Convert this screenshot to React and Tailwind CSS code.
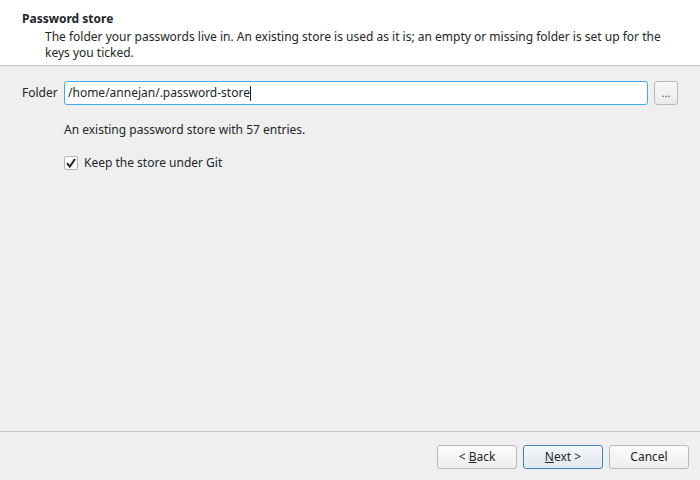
export default function App() {
  return (
    <div
      className="w-[700px] h-[480px] flex flex-col bg-[#efefef] text-[#232629] text-[12px] leading-[16px]"
      style={{ fontFamily: '"Noto Sans", sans-serif' }}
    >
      {/* Header */}
      <div className="bg-white border-b border-[#c4c5c6] h-[66px] pt-[11px] pl-[22px] pr-[22px]">
        <div className="font-bold mb-[2px]">Password store</div>
        <div className="pl-[23px]">
          The folder your passwords live in. An existing store is used as it is; an empty or missing folder is set up for the
          keys you ticked.
        </div>
      </div>

      {/* Body */}
      <div className="flex-1 pt-[15px] pl-[22px] pr-[22px]">
        <div className="flex items-center">
          <span className="w-[42px]">Folder</span>
          <div className="w-[584px] h-[24px] bg-white border border-[#3daee9] rounded-[3px] flex items-center pl-[3px]">
            <span>/home/annejan/.password-store</span>
            <span className="w-px h-[15px] bg-[#232629]"></span>
          </div>
          <button className="ml-[6px] w-[24px] h-[24px] rounded-[3px] border border-[#b8b9ba] bg-gradient-to-b from-[#f8f8f8] to-[#eaeaea] text-[11px] leading-[10px] flex items-end justify-center pb-[6px] text-[#6a4c3a]">
            ...
          </button>
        </div>

        <div className="pl-[42px] mt-[17px]">An existing password store with 57 entries.</div>

        <div className="pl-[42px] mt-[17px] flex items-center gap-[6px]">
          <div className="w-[14px] h-[14px] bg-white border border-[#b0b1b2] rounded-[2px] flex items-center justify-center">
            <svg width="12" height="12" viewBox="0 0 12 12">
              <path d="M2 6.2 L4.8 9.6 L10 2" fill="none" stroke="#232629" strokeWidth="2" />
            </svg>
          </div>
          <span>Keep the store under Git</span>
        </div>
      </div>

      {/* Footer */}
      <div className="border-t border-[#c4c5c6] h-[49px] flex justify-end items-start pt-[13px] pr-[11px] gap-[6px]">
        <button className="w-[80px] h-[24px] rounded-[3px] border border-[#b8b9ba] bg-gradient-to-b from-[#fbfbfb] to-[#eeeeee]">
          &lt; <span className="underline">B</span>ack
        </button>
        <button className="w-[80px] h-[24px] rounded-[3px] border border-[#3a85b8] bg-gradient-to-b from-[#f6f8fa] to-[#dfe7ee]">
          <span className="underline">N</span>ext &gt;
        </button>
        <button className="w-[80px] h-[24px] rounded-[3px] border border-[#b8b9ba] bg-gradient-to-b from-[#fbfbfb] to-[#eeeeee]">
          Cancel
        </button>
      </div>
    </div>
  );
}
